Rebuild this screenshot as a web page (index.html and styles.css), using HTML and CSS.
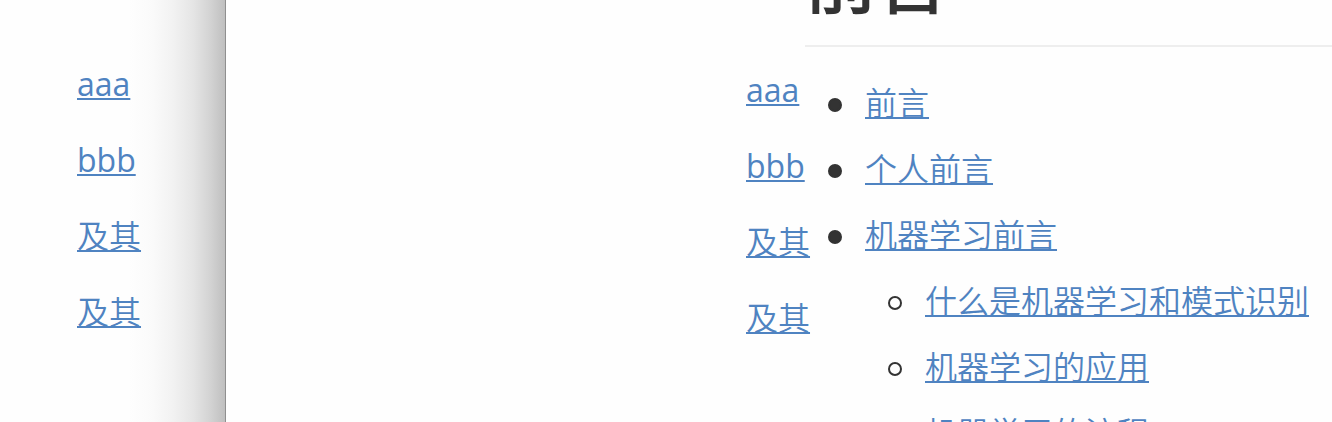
FILE: index.html
```html
<!DOCTYPE html>
<html lang="zh-CN">
<head>
<meta charset="utf-8">
<title>前言</title>
<link rel="stylesheet" href="styles.css">
</head>
<body>
<div class="layout">
  <aside class="sidebar">
    <ul class="links">
      <li><a href="#aaa">aaa</a></li>
      <li><a href="#bbb">bbb</a></li>
      <li><a href="#c">及其</a></li>
      <li><a href="#d">及其</a></li>
    </ul>
  </aside>
  <main class="page">
    <nav class="floating">
      <ul class="links">
        <li><a href="#aaa">aaa</a></li>
        <li><a href="#bbb">bbb</a></li>
        <li><a href="#c">及其</a></li>
        <li><a href="#d">及其</a></li>
      </ul>
    </nav>
    <article class="article">
      <h1 class="title">前言</h1>
      <ul class="toc">
        <li><a href="#preface">前言</a></li>
        <li><a href="#personal">个人前言</a></li>
        <li><a href="#ml">机器学习前言</a>
          <ul class="toc toc-nested">
            <li><a href="#what">什么是机器学习和模式识别</a></li>
            <li><a href="#usage">机器学习的应用</a></li>
            <li><a href="#flow">机器学习的流程</a></li>
          </ul>
        </li>
      </ul>
    </article>
  </main>
</div>
</body>
</html>
```
FILE: styles.css
```css
* {
  box-sizing: border-box;
}

body {
  margin: 0;
  overflow: hidden;
  background: #fefefe;
  color: #333;
  font-family: "Open Sans", "Noto Sans CJK SC DemiLight", "Noto Sans CJK SC", sans-serif;
  font-size: 32px;
}

ul {
  margin: 0;
  padding: 0;
  list-style: none;
}

a {
  color: #4f83c1;
  text-decoration: underline;
  text-decoration-thickness: 2px;
  text-decoration-skip-ink: none;
  text-underline-offset: 2px;
}

.layout {
  display: flex;
  height: 100vh;
}

.sidebar {
  flex: 0 0 226px;
  padding: 46px 0 0 77px;
  border-right: 1px solid #8f8f8f;
  background: linear-gradient(to left, #bfbfbf 0, #d2d2d2 14px, #e5e5e5 32px, #f2f2f2 52px, #fafafa 72px, #fefefe 96px);
}

.links li {
  height: 76px;
  line-height: 76px;
}

.page {
  position: relative;
  flex: 1;
  min-width: 0;
  padding-left: 579px;
}

.floating {
  position: absolute;
  top: 52px;
  left: 520px;
  width: 70px;
}

.title {
  margin: -72px 0 23px;
  padding-bottom: 15px;
  border-bottom: 2px solid #eee;
  font-size: 72px;
  line-height: 102px;
}

.toc {
  padding-left: 60px;
  line-height: 66px;
  white-space: nowrap;
}

.toc li {
  position: relative;
}

.toc li::before {
  content: "";
  box-sizing: border-box;
  position: absolute;
  top: 28px;
  left: -37px;
  width: 14px;
  height: 14px;
  border: 2px solid #333;
  border-radius: 50%;
  background: #333;
}

.toc-nested li::before,
.toc .toc-nested li::before {
  background: none;
}
```
